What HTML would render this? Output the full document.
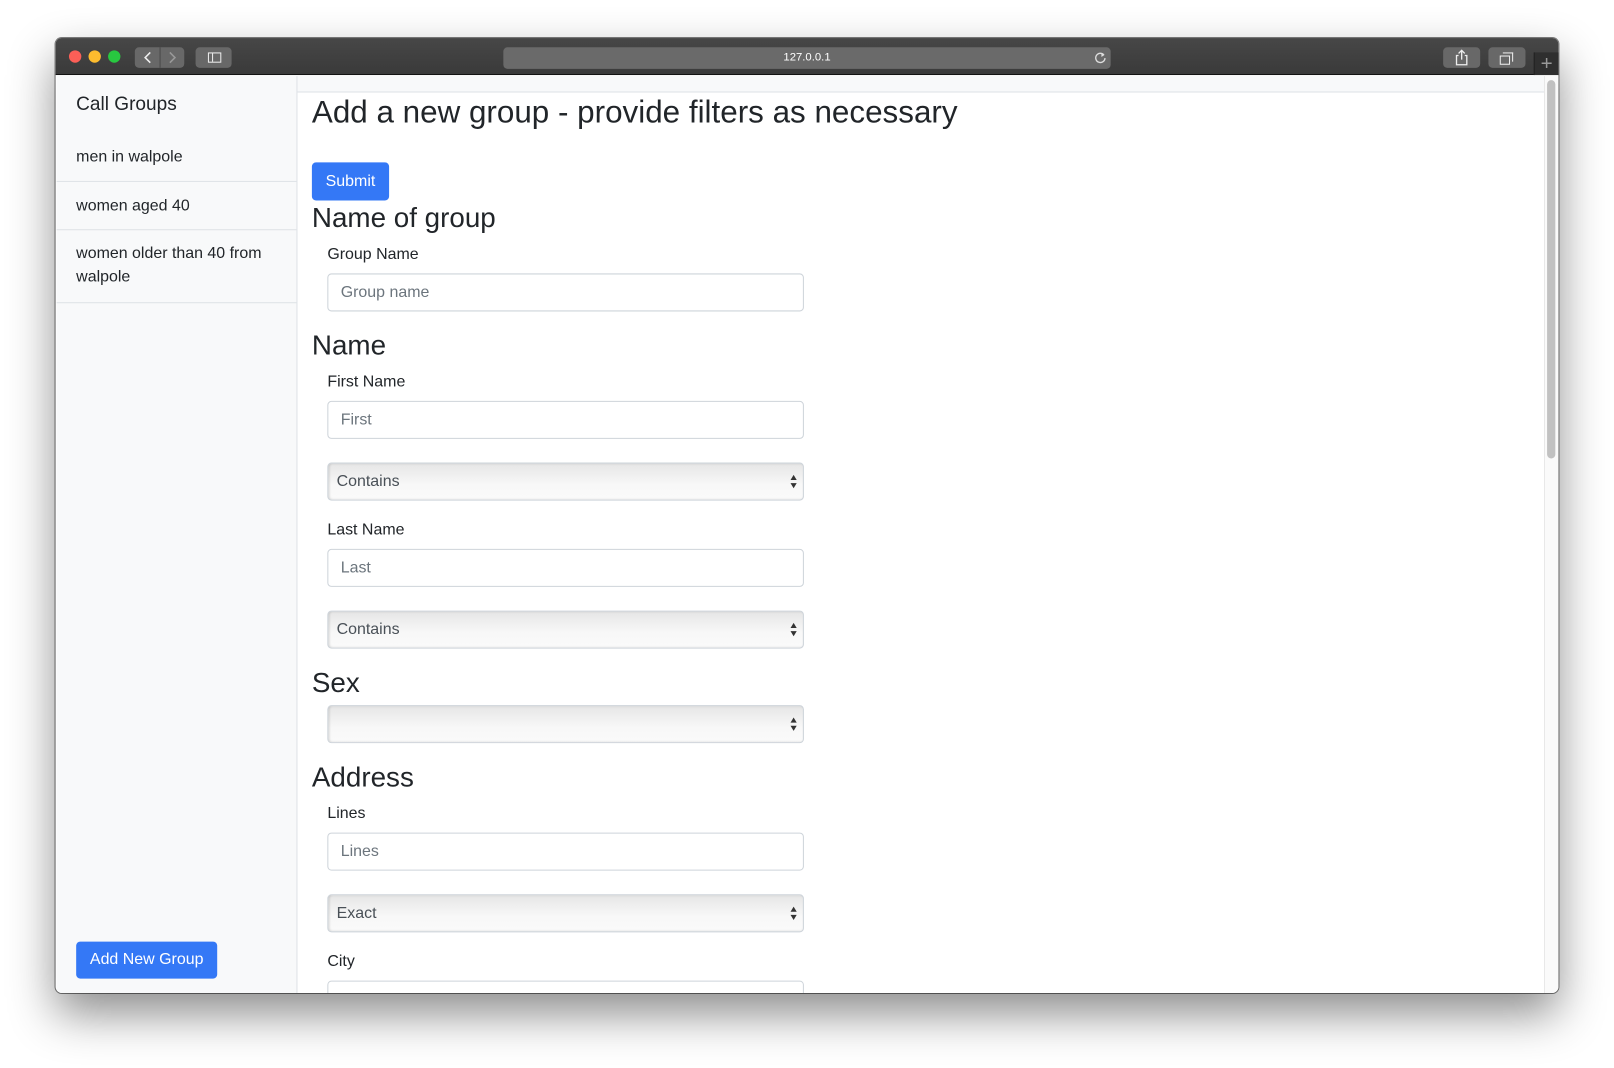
<!DOCTYPE html>
<html><head><meta charset="utf-8"><style>
*{box-sizing:border-box;margin:0;padding:0}
html,body{width:1614px;height:1068px;overflow:hidden;background:#fff}
#s{position:absolute;left:0;top:0;width:1568px;height:1039px;transform:scale(1.02934,1.02791);transform-origin:0 0;font-family:"Liberation Sans",sans-serif;color:#212529}
.a{position:absolute}
#win{left:54px;top:37px;width:1460px;height:929px;border-radius:6px;overflow:hidden;box-shadow:0 20px 45px rgba(0,0,0,.45),0 0 0 1px rgba(0,0,0,.5);background:#fff}
#tb{left:0;top:0;width:1460px;height:36px;background:linear-gradient(#474747,#3a3a3a);border-bottom:1px solid #111}
.dot{width:12px;height:12px;border-radius:50%;top:12px}
.btn{background:#686868;border-radius:4px;top:9px;height:20px}
#side{left:1px;top:37px;width:234px;height:892px;background:#f8f9fa;border-right:1px solid #dee2e6}
.it{left:0;width:233px;border-bottom:1px solid #dee2e6;font-size:15.5px;padding-left:19px;line-height:23px}
.bb{background:#3478f6;color:#fff;border-radius:4px;font-size:15.5px;text-align:center}
.lab{left:264px;font-size:15.5px}
.inp{left:264px;width:463px;height:37px;border:1px solid #ced4da;border-radius:4px;font-size:15.5px;color:#6c757d;padding:9px 12px;background:#fff}
.sel{left:264px;width:463px;height:37px;border:1px solid #ced4da;border-radius:4px;font-size:15.5px;color:#495057;padding:9px 8px;background:linear-gradient(#e6e6e6,#f8f8f8 60%,#fafafa);box-shadow:inset 1px 0 2px rgba(0,0,0,.15)}
.sel:after{content:"";position:absolute;right:6px;top:11px;border:3.5px solid transparent;border-bottom:5px solid #333;border-top:0}
.sel:before{content:"";position:absolute;right:6px;top:19px;border:3.5px solid transparent;border-top:5px solid #333;border-bottom:0}
.h3{left:249px;font-size:27px}
</style></head><body><div id="s">
<div id="win" class="a">
<div id="tb" class="a">
<div class="a dot" style="left:13px;background:#fc5f57"></div>
<div class="a dot" style="left:32px;background:#fdbc2e"></div>
<div class="a dot" style="left:51px;background:#28c840"></div>
<div class="a btn" style="left:77px;width:48px"></div>
<div class="a" style="left:101px;top:9px;width:1px;height:20px;background:#4a4a4a"></div>
<svg class="a" style="left:77px;top:9px" width="48" height="20"><path d="M15 5l-5 5 5 5" stroke="#eee" stroke-width="1.5" fill="none"/><path d="M34 5l5 5-5 5" stroke="#999" stroke-width="1.5" fill="none"/></svg>
<div class="a btn" style="left:136px;width:35px"></div>
<div class="a" style="left:148px;top:14px;width:13px;height:10px;border:1.3px solid #eee"><div style="width:4px;height:100%;border-right:1.3px solid #eee"></div></div>
<div class="a btn" style="left:435px;width:590px;height:21px;background:#6a6a6a;color:#fff;font-size:11px;text-align:center;line-height:21px">127.0.0.1</div>
<svg class="a" style="left:1008px;top:12px" width="14" height="14"><path d="M10.5 4.5A4.5 4.5 0 1 0 11.5 7.5" stroke="#ddd" stroke-width="1.3" fill="none"/><path d="M8 2.5l3 2-3 2z" fill="#ddd"/></svg>
<div class="a btn" style="left:1348px;width:36px"></div>
<svg class="a" style="left:1358px;top:10px" width="16" height="18"><path d="M5 7H3v9h10V7h-2M8 2v9M5 5l3-3 3 3" stroke="#eee" stroke-width="1.3" fill="none"/></svg>
<div class="a btn" style="left:1392px;width:36px"></div>
<div class="a" style="left:1403px;top:17px;width:10px;height:9px;border:1.3px solid #eee"></div>
<div class="a" style="left:1406px;top:14px;width:10px;height:9px;border-top:1.3px solid #eee;border-right:1.3px solid #eee"></div>
<div class="a" style="left:1436px;top:14px;width:24px;height:22px;background:#2f2f2f;border-left:1px solid #222;color:#999;font-size:20px;text-align:center;line-height:22px">+</div>
</div>
<div id="side" class="a">
<div class="a" style="left:19px;top:16px;font-size:18.5px">Call Groups</div>
<div class="a it" style="top:29px;height:74px;padding-top:38px">men in walpole</div>
<div class="a it" style="top:103px;height:47px;padding-top:12px">women aged 40</div>
<div class="a it" style="top:150px;height:71px;padding-top:11px">women older than 40 from walpole</div>
<div class="a bb" style="left:19px;top:842px;width:137px;height:36px;line-height:36px">Add New Group</div>
</div>
<div class="a" style="left:235px;top:37px;width:1211px;height:16px;background:#f8f9fa;border-bottom:1px solid #dee2e6"></div>
<div class="a" style="left:1446px;top:37px;width:14px;height:892px;background:#fafafa;border-left:1px solid #e8e8e8"></div>
<div class="a" style="left:1449px;top:41px;width:8px;height:368px;background:#c1c1c1;border-radius:4px"></div>
<div class="a" style="left:249px;top:55px;font-size:30.5px">Add a new group - provide filters as necessary</div>
<div class="a bb" style="left:249px;top:121px;width:75px;height:37px;line-height:37px">Submit</div>
<div class="a h3" style="top:160px">Name of group</div>
<div class="a lab" style="top:202px">Group Name</div>
<div class="a inp" style="top:229px">Group name</div>
<div class="a h3" style="top:284px">Name</div>
<div class="a lab" style="top:326px">First Name</div>
<div class="a inp" style="top:353px">First</div>
<div class="a sel" style="top:413px">Contains</div>
<div class="a lab" style="top:470px">Last Name</div>
<div class="a inp" style="top:497px">Last</div>
<div class="a sel" style="top:557px">Contains</div>
<div class="a h3" style="top:612px">Sex</div>
<div class="a sel" style="top:649px"></div>
<div class="a h3" style="top:704px">Address</div>
<div class="a lab" style="top:746px">Lines</div>
<div class="a inp" style="top:773px">Lines</div>
<div class="a sel" style="top:833px">Exact</div>
<div class="a lab" style="top:890px">City</div>
<div class="a inp" style="top:917px"></div>
</div>
</div></body></html>
